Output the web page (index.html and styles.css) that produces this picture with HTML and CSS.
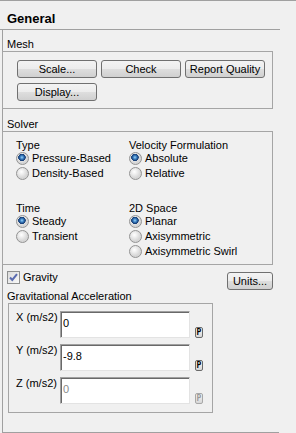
FILE: index.html
```html
<!DOCTYPE html>
<html lang="en">
<head>
  <meta charset="UTF-8">
  <title>General</title>
  <link rel="stylesheet" href="styles.css">
</head>
<body>
  <div class="title">General</div>
  <div class="panel">
    <div class="group-label">Mesh</div>
    <div class="group mesh">
      <button class="btn">Scale...</button>
      <button class="btn">Check</button>
      <button class="btn">Report Quality</button>
      <button class="btn">Display...</button>
    </div>

    <div class="group-label solver-label">Solver</div>
    <div class="group solver">
      <div class="opt-group">
        <div class="opt-title">Type</div>
        <label class="opt"><input type="radio" name="type" checked>Pressure-Based</label>
        <label class="opt"><input type="radio" name="type">Density-Based</label>
      </div>
      <div class="opt-group">
        <div class="opt-title">Velocity Formulation</div>
        <label class="opt"><input type="radio" name="vel" checked>Absolute</label>
        <label class="opt"><input type="radio" name="vel">Relative</label>
      </div>
      <div class="opt-group">
        <div class="opt-title">Time</div>
        <label class="opt"><input type="radio" name="time" checked>Steady</label>
        <label class="opt"><input type="radio" name="time">Transient</label>
      </div>
      <div class="opt-group">
        <div class="opt-title">2D Space</div>
        <label class="opt"><input type="radio" name="space" checked>Planar</label>
        <label class="opt"><input type="radio" name="space">Axisymmetric</label>
        <label class="opt"><input type="radio" name="space">Axisymmetric Swirl</label>
      </div>
    </div>

    <div class="gravity-row">
      <label class="check">
        <span class="box">
          <svg width="11" height="11" viewBox="0 0 11 11"><path d="M2 5.5 L4.3 8 L9 2.2" fill="none" stroke="#5a6bb0" stroke-width="2"/></svg>
        </span>Gravity
      </label>
      <button class="btn units">Units...</button>
    </div>

    <div class="group-label">Gravitational Acceleration</div>
    <div class="group accel">
      <div class="field">
        <span class="field-name">X (m/s2)</span>
        <input class="num" type="text" value="0">
        <span class="pbtn">P</span>
      </div>
      <div class="field">
        <span class="field-name">Y (m/s2)</span>
        <input class="num" type="text" value="-9.8">
        <span class="pbtn">P</span>
      </div>
      <div class="field">
        <span class="field-name">Z (m/s2)</span>
        <input class="num off" type="text" value="0">
        <span class="pbtn off">P</span>
      </div>
    </div>
  </div>
</body>
</html>
```
FILE: styles.css
```css
body { margin:0; min-height:432px; background:#f0f0f0; border-top:1px solid #a0a0a0; font-family:"Liberation Sans",Arial,sans-serif; font-size:11px; color:#000; }
.title { width:280px; height:29px; box-sizing:border-box; padding:10px 0 0 7px; border-bottom:1px solid #a0a0a0; font-size:13px; font-weight:bold; line-height:16px; }
.panel { margin-left:2px; width:277px; box-sizing:border-box; border-left:1px solid #a0a0a0; border-bottom:1px solid #a0a0a0; padding:8px 0 19px; }
.group-label { padding-left:4px; height:13px; line-height:13px; }
.solver-label { margin-top:9px; }
.group { margin-left:-1px; width:271px; box-sizing:border-box; border:1px solid #a5a5a5; }

.btn { width:80px; height:18px; padding:0; border:1px solid #707070; border-radius:3px; background:linear-gradient(#f3f3f3 0%, #ececec 50%, #dedede 51%, #d0d0d0 100%); font-family:"Liberation Sans",Arial,sans-serif; font-size:11px; line-height:15px; color:#000; }
.mesh { display:grid; grid-template-columns:repeat(3, 80px); gap:5px 4px; padding:8px 0 7px 14px; }

.solver { display:grid; grid-template-columns:113px 1fr; row-gap:21px; padding:7px 0 5px 13px; }
.opt-title { height:12px; line-height:12px; }
.opt { display:flex; align-items:center; height:15px; line-height:15px; white-space:nowrap; }
.opt input { appearance:none; -webkit-appearance:none; width:13px; height:13px; margin:0 3px 0 0; border:1px solid #939393; border-radius:50%; box-sizing:border-box; background:radial-gradient(circle at 40% 35%, #ffffff 0, #f2f2f2 2px, #d6d6d6 6px); }
.opt input:checked { background:radial-gradient(circle at 45% 40%, #9fd3f5 0, #3f86c8 1.6px, #173f78 3.2px, #2a4d80 3.6px, transparent 3.9px), radial-gradient(circle at 40% 35%, #ffffff 0, #f2f2f2 2px, #d6d6d6 6px); }

.gravity-row { display:flex; justify-content:space-between; align-items:flex-start; width:270px; height:25px; box-sizing:border-box; padding:6px 0 0 4px; }
.check { display:flex; align-items:center; height:13px; line-height:13px; }
.box { display:flex; align-items:center; justify-content:center; width:13px; height:13px; margin-right:3px; box-sizing:border-box; border:1px solid #8e8f8f; background:linear-gradient(135deg, #dcdcdc, #f8f8f8); }
.units { width:46px; margin-top:1px; }

.accel { margin-left:5px; width:205px; padding:7px 0 8px 7px; display:flex; flex-direction:column; gap:6px; }
.field { display:flex; align-items:flex-end; height:27px; }
.field-name { align-self:flex-start; width:44px; line-height:13px; }
.num { width:130px; height:27px; margin:0 5px 0 0; box-sizing:border-box; padding:0 0 3px 2px; border:1px solid; border-color:#a0a0a0 #e3e3e3 #e3e3e3 #a0a0a0; box-shadow:inset 1px 1px 0 #696969; background:#fff; font-family:"Liberation Sans",Arial,sans-serif; font-size:11px; color:#000; outline:none; }
.num.off { color:#8a8a8a; }
.pbtn { width:8px; height:11px; box-sizing:border-box; border:1px solid #6a6a6a; border-radius:2px; background:linear-gradient(#f4f4f4, #d8d8d8); font-family:"DejaVu Sans Mono",monospace; font-size:8px; font-weight:bold; line-height:9px; text-align:center; }
.pbtn.off { border-color:#a8a8a8; color:#9a9a9a; }
```
